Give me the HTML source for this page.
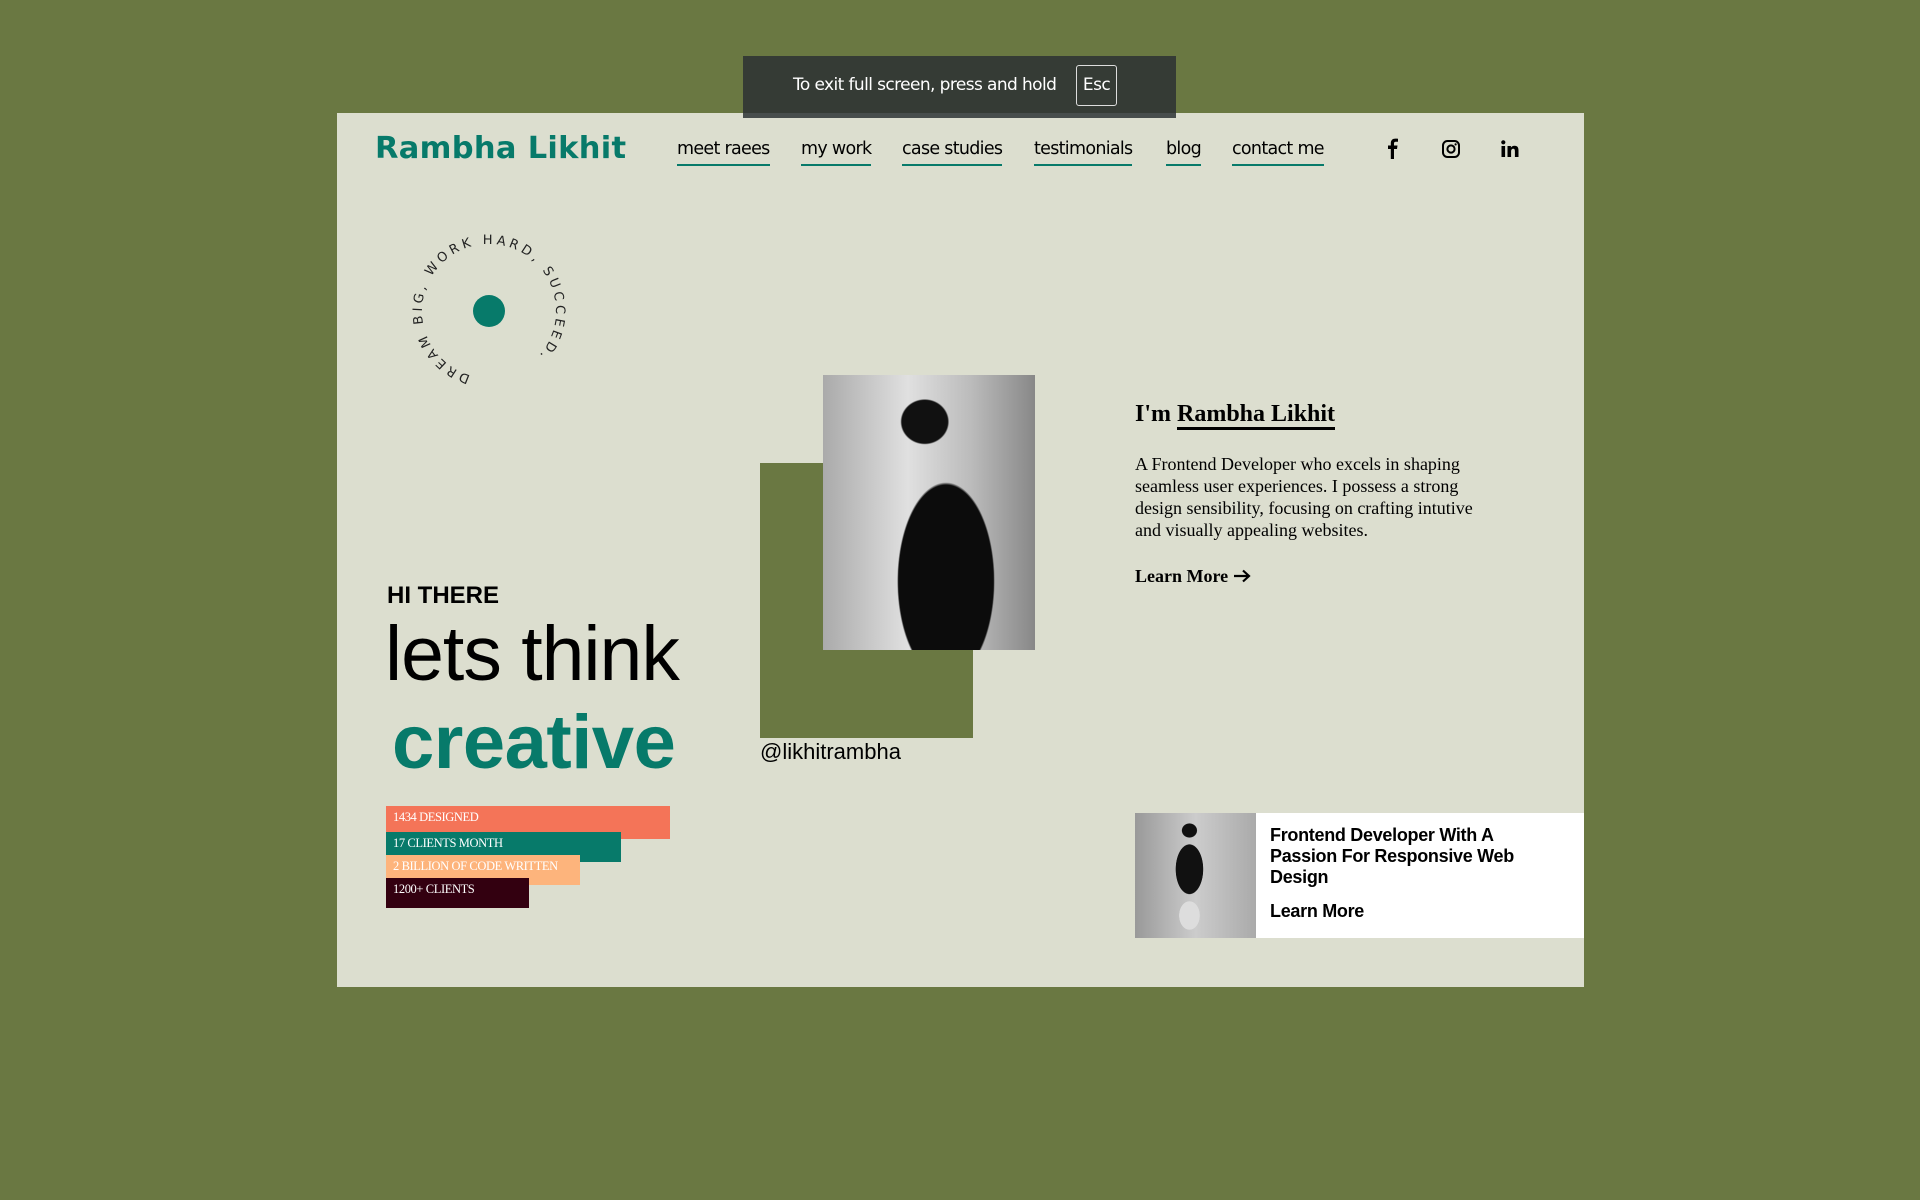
<!DOCTYPE html>
<html><head><meta charset="utf-8"><style>
*{margin:0;padding:0;box-sizing:border-box}
body{width:1920px;height:1200px;background:#6a7842;position:relative;overflow:hidden;font-family:"Liberation Sans",Arial,sans-serif}
.panel{position:absolute;left:337px;top:113px;width:1247px;height:874px;background:#dcdecf}
.a{position:absolute;white-space:nowrap}
.toast{position:absolute;left:743px;top:56px;width:433px;height:62px;background:#353b35;border-bottom:5px solid #474d4c;color:#fff;font-family:"DejaVu Sans",sans-serif;font-size:17px;letter-spacing:-0.6px}
.toast span{position:absolute;left:50px;top:19px}
.toast b{position:absolute;left:333px;top:9px;width:41px;height:41px;border:1.5px solid #ddd;border-radius:3px;font-weight:normal;text-align:center;line-height:38px}
.logo{left:375px;top:131px;font-family:"DejaVu Sans",sans-serif;font-weight:bold;font-size:30.5px;color:#077a6a;letter-spacing:0.3px}
.nav{top:139px;font-family:"DejaVu Sans",sans-serif;font-size:17.5px;color:#000;letter-spacing:-0.7px;border-bottom:2px solid #077a6a;padding-bottom:5px}
.bar{position:absolute;left:386px;color:#fff;font-family:"Liberation Serif",serif;font-size:12.5px;padding:4px 0 0 7px;letter-spacing:-0.4px}
</style></head><body>
<div class="panel"></div>
<div class="toast"><span>To exit full screen, press and hold</span><b>Esc</b></div>
<div class="a logo">Rambha Likhit</div>
<div class="a nav" style="left:677px">meet raees</div>
<div class="a nav" style="left:801px">my work</div>
<div class="a nav" style="left:902px">case studies</div>
<div class="a nav" style="left:1034px">testimonials</div>
<div class="a nav" style="left:1166px">blog</div>
<div class="a nav" style="left:1232px">contact me</div>
<svg class="a" style="left:1384px;top:138px" width="18" height="22" viewBox="0 0 18 22"><path d="M10 21V11h3l.5-3.5H10V5.5c0-1 .4-1.7 1.8-1.7H14V.8C13.5.7 12.5.6 11.3.6 8.6.6 6.8 2.2 6.8 5.2v2.3H4V11h2.8v10z" fill="#000"/></svg>
<svg class="a" style="left:1441px;top:139px" width="20" height="20" viewBox="0 0 20 20"><rect x="2" y="2" width="16" height="16" rx="4.5" fill="none" stroke="#000" stroke-width="2"/><circle cx="10" cy="10" r="3.6" fill="none" stroke="#000" stroke-width="2"/><circle cx="14.6" cy="5.4" r="1.1" fill="#000"/></svg>
<svg class="a" style="left:1500px;top:139px" width="20" height="20" viewBox="0 0 20 20"><rect x="1.5" y="7" width="3.6" height="11" fill="#000"/><circle cx="3.3" cy="3.3" r="2.1" fill="#000"/><path d="M7.5 7h3.4v1.6c.6-1.1 2-1.9 3.7-1.9 3 0 3.9 1.9 3.9 4.7V18h-3.6v-5.8c0-1.4-.3-2.5-1.7-2.5s-2.1 1-2.1 2.6V18H7.5z" fill="#000"/></svg>

<svg class="a" style="left:409px;top:231px" width="160" height="160" viewBox="0 0 160 160">
<defs><path id="c" d="M61.5 144.4 A67 67 0 0 1 98.5 15.6 A67 67 0 0 1 61.5 144.4"/></defs>
<circle cx="80" cy="80" r="16" fill="#077a6a"/>
<text font-family="DejaVu Sans,sans-serif" font-size="13" letter-spacing="3.6" fill="#222"><textPath href="#c">DREAM BIG, WORK HARD, SUCCEED.</textPath></text>
</svg>

<div class="a" style="left:760px;top:463px;width:213px;height:275px;background:#6a7842"></div>
<div class="a" style="left:823px;top:375px;width:212px;height:275px;background:radial-gradient(ellipse 18% 13% at 48% 17%,#111 60%,transparent 64%),radial-gradient(ellipse 32% 50% at 58% 75%,#0c0c0c 70%,transparent 72%),linear-gradient(90deg,#aaa,#e0e0e0 40%,#bbb 70%,#888)"></div>
<div class="a" style="left:760px;top:739px;font-size:22px;color:#000">@likhitrambha</div>

<div class="a" style="left:387px;top:582px;font-size:24px;font-weight:bold;color:#000">HI THERE</div>
<div class="a" style="left:385px;top:610px;font-size:77px;color:#000;letter-spacing:-1px">lets think</div>
<div class="a" style="left:392px;top:699px;font-size:76px;font-weight:bold;color:#077a6a;letter-spacing:-0.5px">creative</div>

<div class="bar" style="top:806px;width:284px;height:33px;background:#f47458">1434 DESIGNED</div>
<div class="bar" style="top:832px;width:235px;height:30px;background:#077a6a">17 CLIENTS MONTH</div>
<div class="bar" style="top:855px;width:194px;height:30px;background:#fdb47c">2 BILLION OF CODE WRITTEN</div>
<div class="bar" style="top:878px;width:143px;height:30px;background:#330010">1200+ CLIENTS</div>

<div class="a" style="left:1135px;top:401px;font-family:'Liberation Serif',serif;font-weight:bold;font-size:24px;color:#000">I'm <span style="border-bottom:3px solid #000">Rambha Likhit</span></div>
<div class="a" style="left:1135px;top:453px;width:362px;white-space:normal;font-family:'Liberation Serif',serif;font-size:18px;line-height:22px;color:#000">A Frontend Developer who excels in shaping seamless user experiences. I possess a strong design sensibility, focusing on crafting intutive and visually appealing websites.</div>
<div class="a" style="left:1135px;top:566px;font-family:'Liberation Serif',serif;font-weight:bold;font-size:18px;color:#000">Learn More <svg width="18" height="14" viewBox="0 0 18 14" style="vertical-align:-1px"><path d="M1 7h15M10 1.5L16 7l-6 5.5" fill="none" stroke="#000" stroke-width="2.2"/></svg></div>

<div class="a" style="left:1135px;top:813px;width:449px;height:125px;background:#fff"></div>
<div class="a" style="left:1135px;top:813px;width:121px;height:125px;background:radial-gradient(ellipse 10% 9% at 45% 14%,#111 60%,transparent 65%),radial-gradient(ellipse 16% 28% at 45% 45%,#111 70%,transparent 72%),radial-gradient(ellipse 12% 16% at 45% 82%,#ddd 70%,transparent 72%),linear-gradient(90deg,#999,#ccc 50%,#aaa)"></div>
<div class="a" style="left:1270px;top:825px;font-size:18px;font-weight:bold;line-height:21px;color:#000;white-space:normal;width:270px;letter-spacing:-0.3px">Frontend Developer With A Passion For Responsive Web Design</div>
<div class="a" style="left:1270px;top:901px;font-size:18px;font-weight:bold;color:#000;letter-spacing:-0.3px">Learn More</div>
</body></html>
